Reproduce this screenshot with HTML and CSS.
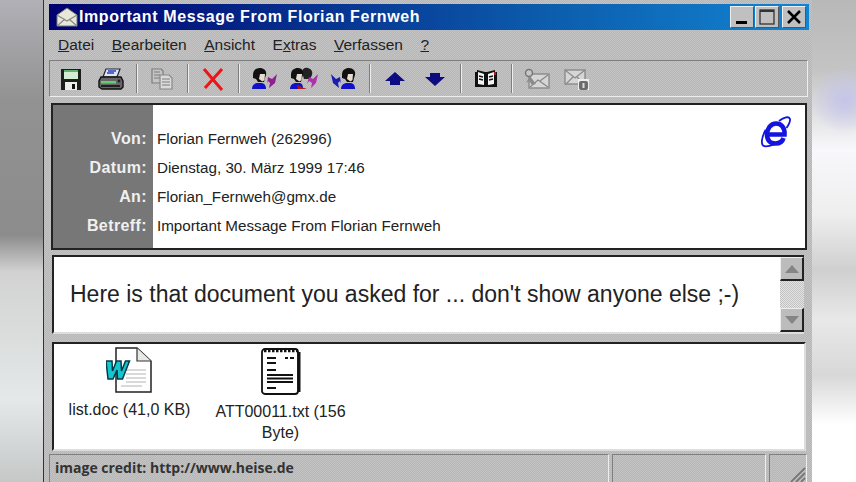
FILE: index.html

```html
<!DOCTYPE html>
<html lang="de">
<head>
  <meta charset="UTF-8">
  <meta name="viewport" content="width=device-width, initial-scale=1.0">
  <title>Important Message From Florian Fernweh</title>
  <link rel="stylesheet" href="styles.css">
</head>
<body>
  <div class="window">
    <div class="titlebar">
      <svg class="title-icon" width="24" height="22" viewBox="0 0 24 22">
        <path d="M2 9 12 2l10 7v11H2z" fill="#e8e8d8" stroke="#777" stroke-width="1"/>
        <path d="M2 9l10 6 10-6M2 20l8-7M22 20l-8-7" fill="none" stroke="#888" stroke-width="1.2"/>
      </svg>
      <span class="title-text">Important Message From Florian Fernweh</span>
      <div class="win-buttons">
        <div class="win-btn"><svg width="24" height="22" viewBox="0 0 24 22"><rect x="6" y="15" width="11" height="3" fill="#000"/></svg></div>
        <div class="win-btn"><svg width="24" height="22" viewBox="0 0 24 22"><rect x="5" y="4" width="14" height="14" fill="none" stroke="#333" stroke-width="1.3"/><rect x="5" y="4" width="14" height="2" fill="#333"/></svg></div>
        <div class="win-btn win-btn-close"><svg width="24" height="22" viewBox="0 0 24 22"><path d="M6 5l12 12M18 5 6 17" stroke="#000" stroke-width="2.6"/></svg></div>
      </div>
    </div>

    <div class="menubar">
      <span><u>D</u>atei</span>
      <span><u>B</u>earbeiten</span>
      <span><u>A</u>nsicht</span>
      <span>E<u>x</u>tras</span>
      <span><u>V</u>erfassen</span>
      <span><u>?</u></span>
    </div>

    <div class="toolbar">
      <div class="tb-btn">
        <svg width="24" height="24" viewBox="0 0 24 24">
          <rect x="2" y="2" width="20" height="21" fill="#182018"/>
          <rect x="5" y="3" width="14" height="9" fill="#d4ecd4"/>
          <rect x="5" y="3" width="14" height="2" fill="#60b070"/>
          <rect x="6" y="15" width="12" height="8" fill="#ececec"/>
          <rect x="13" y="17" width="3" height="5" fill="#111"/>
        </svg>
      </div>
      <div class="tb-btn">
        <svg width="26" height="24" viewBox="0 0 26 24">
          <path d="M8 2h14l-3 8H5z" fill="#dfe4f5" stroke="#223" stroke-width="1.2"/>
          <path d="M10 4h8M9 6h7" stroke="#2a40c0" stroke-width="1.5"/>
          <path d="M3 10h20l2 4v6l-2 2H4l-3-2v-6z" fill="#666" stroke="#111" stroke-width="1.4"/>
          <rect x="3" y="14" width="15" height="2.5" fill="#5ed070"/>
          <path d="M3 19h19" stroke="#111" stroke-width="1.6"/>
          <circle cx="21" cy="14" r="1.4" fill="#222"/>
        </svg>
      </div>
      <div class="tb-sep"></div>
      <div class="tb-btn">
        <svg width="24" height="24" viewBox="0 0 24 24" fill="#c4c4c4" stroke="#7c7c7c" stroke-width="1.2">
          <path d="M2 2h9l2 2v12H2z"/>
          <path d="M4 5h6M4 8h6M4 11h6"/>
          <path d="M10 8h9l3 3v11H10z" fill="#dadada" stroke="#888"/>
          <path d="M12 12h8M12 15h8M12 18h8"/>
        </svg>
      </div>
      <div class="tb-sep"></div>
      <div class="tb-btn">
        <svg width="24" height="24" viewBox="0 0 24 24"><path d="M3 2l18 21M21 2 4 21" stroke="#e81818" stroke-width="3" fill="none"/></svg>
      </div>
      <div class="tb-sep"></div>
      <div class="tb-btn">
        <svg width="28" height="24" viewBox="0 0 28 24">
          <path d="M3 8c0-5 3-7 7-7s7 3 6 7l-1 3-1 4H8l-2-3-3-1z" fill="#111"/>
          <path d="M10 7h5l-.5 6-2 1.500L9 12z" fill="#e8dcd0"/>
          <path d="M2 22c0-4 3-6 6-6h3c3 0 5 2 5 6z" fill="#1010c8"/>
          <path d="M27 7l-2 9-6 5 1-5-2-2-1 3 1-7 4 2z" fill="#902090"/>
        </svg>
      </div>
      <div class="tb-btn">
        <svg width="30" height="24" viewBox="0 0 30 24">
          <path d="M13 5c0-3 3-5 6-4s5 3 4 7l-2 4h-6z" fill="#222"/>
          <path d="M2 8c0-5 3-7 7-7s6 3 5 7l-1 3-1 4H7l-2-3-3-1z" fill="#111"/>
          <path d="M8 7h5l-.5 6-2 1.500L7 12z" fill="#e8dcd0"/>
          <path d="M1 22c0-4 3-6 6-6h3c3 0 4 2 4 6z" fill="#1010c8"/>
          <path d="M8 18l7 3 3 1H9z" fill="#b01818"/>
          <path d="M29 7l-2 9-5 5 1-5-3-2-2 3 2-7 4 2z" fill="#b030b0"/>
        </svg>
      </div>
      <div class="tb-btn">
        <svg width="28" height="24" viewBox="0 0 28 24">
          <path d="M12 8c0-5 3-7 7-7s7 3 6 7l-1 3-1 4h-6l-2-3-3-1z" fill="#111"/>
          <path d="M18 7h5l-.5 6-2 1.500L17 12z" fill="#e8dcd0"/>
          <path d="M11 22c0-4 3-6 6-6h3c3 0 5 2 5 6z" fill="#1010c8"/>
          <path d="M1 7l2 9 6 5-1-5 2-2 1 3-1-7-4 2z" fill="#1c1cb0"/>
        </svg>
      </div>
      <div class="tb-sep"></div>
      <div class="tb-btn">
        <svg width="22" height="16" viewBox="0 0 22 16"><path d="M11 1l10 9h-5v4H6v-4H1z" fill="#0c0c80"/></svg>
      </div>
      <div class="tb-btn">
        <svg width="22" height="16" viewBox="0 0 22 16"><path d="M11 15 1 6h5V2h10v4h5z" fill="#0c0c80"/></svg>
      </div>
      <div class="tb-sep"></div>
      <div class="tb-btn">
        <svg width="24" height="20" viewBox="0 0 24 20">
          <path d="M1 3l2 0V1l8 2 2 0 8-2v2h2v15H1z" fill="#111"/>
          <path d="M4 3l6 2v11l-6-1zM20 3l-6 2v11l6-1z" fill="#f4f4f4"/>
          <path d="M5 7l4 1M5 10l4 1M15 8l4-1M15 11l4-1" stroke="#111" stroke-width="1.4"/>
          <path d="M20 3h2v3h-2z" fill="#a02020"/>
        </svg>
      </div>
      <div class="tb-sep"></div>
      <div class="tb-btn">
        <svg width="26" height="22" viewBox="0 0 26 22">
          <rect x="5" y="6" width="20" height="14" fill="#d6d6d6" stroke="#8a8a8a" stroke-width="1.4"/>
          <path d="M6 19l8-7 10 7M24 7l-8 6" fill="none" stroke="#888" stroke-width="1.2"/>
          <circle cx="5" cy="5" r="3.5" fill="#c8c8c8" stroke="#777" stroke-width="1.5"/>
          <path d="M6 8l6 8-4 1-3-4-3 2z" fill="#8c8c8c"/>
        </svg>
      </div>
      <div class="tb-btn">
        <svg width="26" height="24" viewBox="0 0 26 24">
          <rect x="1" y="3" width="20" height="14" fill="#d6d6d6" stroke="#8a8a8a" stroke-width="1.4"/>
          <path d="M1 3l10 8 10-8M2 17l7-7M20 17l-7-7" fill="none" stroke="#8a8a8a" stroke-width="1.2"/>
          <rect x="14" y="12" width="11" height="11" fill="#eee"/>
          <rect x="15" y="14" width="9" height="9" rx="2" fill="#6c6c6c"/>
          <path d="M19.500 16v5" stroke="#ddd" stroke-width="2"/>
        </svg>
      </div>
    </div>

    <div class="headers">
      <div class="header-labels">
        <div>Von:</div>
        <div>Datum:</div>
        <div>An:</div>
        <div>Betreff:</div>
      </div>
      <div class="header-values">
        <div>Florian Fernweh (262996)</div>
        <div>Dienstag, 30. März 1999 17:46</div>
        <div>Florian_Fernweh@gmx.de</div>
        <div>Important Message From Florian Fernweh</div>
      </div>
      <svg class="ie-logo" width="30" height="32" viewBox="0 0 30 32">
        <path d="M6 18.500H23.500C24 11 20 7.500 15 7.500 9.500 7.500 6 13 6 18.500 6 24.500 9.500 27.500 14.500 27.500 18.500 27.500 21.500 25.500 22.500 22" fill="none" stroke="#1414e0" stroke-width="4.600"/>
        <path d="M18 5C23 1 28 0 29 3 29.500 6 27.500 9 25.500 12" fill="none" stroke="#1414e0" stroke-width="1.800"/>
        <path d="M4.500 14C1 21 0 27 2 29.500 4.500 31.500 9 30 13 28.500" fill="none" stroke="#1414e0" stroke-width="1.800"/>
      </svg>
    </div>

    <div class="message">
      <div class="message-text">Here is that document you asked for ... don't show anyone else ;-)</div>
      <div class="scrollbar">
        <div class="scroll-btn"><svg width="16" height="10" viewBox="0 0 16 10"><path d="M8 1l7 8H1z" fill="#858585"/></svg></div>
        <div class="scroll-track"></div>
        <div class="scroll-btn"><svg width="16" height="10" viewBox="0 0 16 10"><path d="M8 9 1 1h14z" fill="#858585"/></svg></div>
      </div>
    </div>

    <div class="attachments">
      <div class="attachment">
        <svg width="48" height="46" viewBox="0 0 48 46">
          <path d="M10 1h21l14 13v31H10z" fill="#fff" stroke="#222" stroke-width="1.500"/>
          <path d="M31 1v13h14" fill="#e8e8e8" stroke="#333" stroke-width="1.200"/>
          <path d="M20 23h20M20 27h20M20 31h20M20 35h20M15 39h21" stroke="#b4b4b4" stroke-width="1.200"/>
          <path d="M0 14h6l.5 10 4-10h4.500l.5 10 4-10h4l-7 18h-5l-.5-9-4 9H2z" fill="#12c8d0" stroke="#083848" stroke-width="1.500"/>
        </svg>
        <div class="attachment-name">list.doc (41,0 KB)</div>
      </div>
      <div class="attachment">
        <svg width="42" height="48" viewBox="0 0 42 48">
          <rect x="2" y="2" width="36" height="45" rx="3" fill="#fff" stroke="#111" stroke-width="1.800"/>
          <path d="M39 5v40" stroke="#111" stroke-width="3"/>
          <path d="M4 4h33" stroke="#111" stroke-width="2.600" stroke-dasharray="2.500 1.500"/>
          <path d="M7 11h9M7 16h9M7 23h9M7 28h26M7 31.500h26M7 35h26M7 41h9" stroke="#111" stroke-width="2"/>
          <path d="M25 11h3M30 11h4" stroke="#111" stroke-width="2"/>
        </svg>
        <div class="attachment-name">ATT00011.txt (156 Byte)</div>
      </div>
    </div>

    <div class="statusbar">
      <div class="status-main">image credit: http://www.heise.de</div>
      <div class="status-mid"></div>
      <div class="status-grip">
        <svg width="20" height="20" viewBox="0 0 20 20"><path d="M19 5 5 19M19 10 10 19M19 15l-4 4" stroke="#777" stroke-width="1.800"/></svg>
      </div>
    </div>
  </div>
</body>
</html>
```

FILE: styles.css

```css
html, body {
  margin: 0;
  height: 100%;
  overflow: hidden;
}
body {
  font-family: "Liberation Sans", Arial, sans-serif;
  background:
    linear-gradient(#b0b0b6 0, #929292 100px, #8c8c8c 235px, #d2d2d2 272px, #e4e8e8 400px, #c6c8c8 482px) left top / 50% 100% no-repeat,
    radial-gradient(circle at 845px 100px, #c4c4ea 0, rgba(196,196,234,0) 34px),
    linear-gradient(#b8b8b8 0, #c4c4c4 70px, #f8f8fc 150px, #eeeeee 215px, #cfcfcf 270px, #e8e8e8 320px, #d8d8d8 375px, #ffffff 425px);
}

.window {
  box-sizing: border-box;
  width: 769px;
  height: 482px;
  margin-left: 43px;
  padding: 4px 3px 0 5px;
  border-left: 1px solid #333;
  background: repeating-conic-gradient(#b6b6b6 0 25%, #c4c4c4 0 50%) 0 0 / 2px 2px;
}

.titlebar {
  display: flex;
  align-items: center;
  height: 26px;
  padding-left: 6px;
  background: linear-gradient(90deg, #00006e, #0c5cac 65%, #1284d2);
}
.title-icon {
  margin-right: 0;
}
.title-text {
  flex: 1;
  color: #fff;
  font-size: 16px;
  font-weight: bold;
  letter-spacing: 0.6px;
}
.win-buttons {
  display: flex;
  gap: 1px;
  margin-right: 3px;
}
.win-btn {
  display: flex;
  width: 22px;
  height: 20px;
  align-items: center;
  justify-content: center;
  background: #c0c0c0;
  border-top: 1px solid #eee;
  border-left: 1px solid #eee;
  border-right: 1px solid #555;
  border-bottom: 1px solid #555;
}
.win-btn svg {
  flex: none;
}
.win-btn-close {
  margin-left: 2px;
}

.menubar {
  display: flex;
  gap: 17.500px;
  height: 30px;
  align-items: center;
  padding-left: 9px;
  font-size: 15.500px;
  color: #222;
}

.toolbar {
  box-sizing: border-box;
  display: flex;
  align-items: center;
  height: 37px;
  margin-right: 1px;
  padding-left: 1px;
  border: 1px solid #7e7e7e;
  border-right-color: #eee;
  border-bottom-color: #eee;
}
.tb-btn {
  display: flex;
  width: 40px;
  justify-content: center;
  align-items: center;
}
.tb-sep {
  width: 1px;
  height: 29px;
  margin: 0 4px 0 5px;
  background: #7e7e7e;
  border-right: 1px solid #eee;
}

.headers {
  position: relative;
  box-sizing: border-box;
  display: flex;
  height: 147px;
  margin: 6px 2px 0 2px;
  background: #fff;
  border: 2px solid #222;
  font-size: 15.200px;
  color: #222;
}
.header-labels {
  box-sizing: border-box;
  width: 100px;
  padding: 21px 6px 0 0;
  text-align: right;
  background: #777;
  color: #f0f0f0;
  font-size: 16px;
  font-weight: bold;
  letter-spacing: 0.4px;
}
.header-values {
  padding: 21px 0 0 4px;
}
.header-labels div,
.header-values div {
  height: 29px;
  line-height: 26px;
}
.ie-logo {
  position: absolute;
  top: 11px;
  right: 14px;
}

.message {
  box-sizing: border-box;
  display: flex;
  height: 79px;
  margin: 5px 5px 0 3px;
  background: #fff;
  border-top: 2px solid #222;
  border-left: 2px solid #222;
  border-bottom: 2px solid #ddd;
}
.message-text {
  flex: 1;
  padding: 24px 0 0 16px;
  font-size: 23px;
  color: #222;
  white-space: nowrap;
}
.scrollbar {
  display: flex;
  flex-direction: column;
  width: 24px;
  background: repeating-conic-gradient(#c2c2c2 0 25%, #e4e4e4 0 50%) 0 0 / 2px 2px;
}
.scroll-btn {
  box-sizing: border-box;
  display: flex;
  height: 24px;
  align-items: center;
  justify-content: center;
  background: #bcbcbc;
  border-top: 1px solid #eee;
  border-left: 1px solid #eee;
  border-right: 2px solid #222;
  border-bottom: 2px solid #222;
}
.scroll-track {
  flex: 1;
}

.attachments {
  box-sizing: border-box;
  display: flex;
  align-items: flex-start;
  height: 109px;
  margin: 8px 3px 0 3px;
  padding: 3px 0 0 0;
  background: #fff;
  border-top: 2px solid #222;
  border-left: 2px solid #222;
  border-right: 2px solid #ddd;
  border-bottom: 2px solid #ddd;
}
.attachment {
  display: flex;
  flex-direction: column;
  align-items: center;
  width: 151px;
  font-size: 16px;
  line-height: 21px;
  text-align: center;
  color: #222;
}
.attachment-name {
  margin-top: 6px;
  padding: 0 4px;
}

.statusbar {
  display: flex;
  gap: 3px;
  height: 29px;
  margin-top: 3px;
  margin-right: 2px;
}
.status-main,
.status-mid,
.status-grip {
  box-sizing: border-box;
  border-top: 1px solid #808080;
  border-left: 1px solid #808080;
  border-right: 1px solid #eee;
}
.status-main {
  flex: 1;
  padding: 3px 0 0 5px;
  font-family: "Open Sans", sans-serif;
  font-size: 14px;
  font-weight: bold;
  color: #333;
}
.status-mid {
  width: 154px;
}
.status-grip {
  display: flex;
  width: 38px;
  justify-content: flex-end;
  align-items: flex-end;
  overflow: hidden;
}
```
